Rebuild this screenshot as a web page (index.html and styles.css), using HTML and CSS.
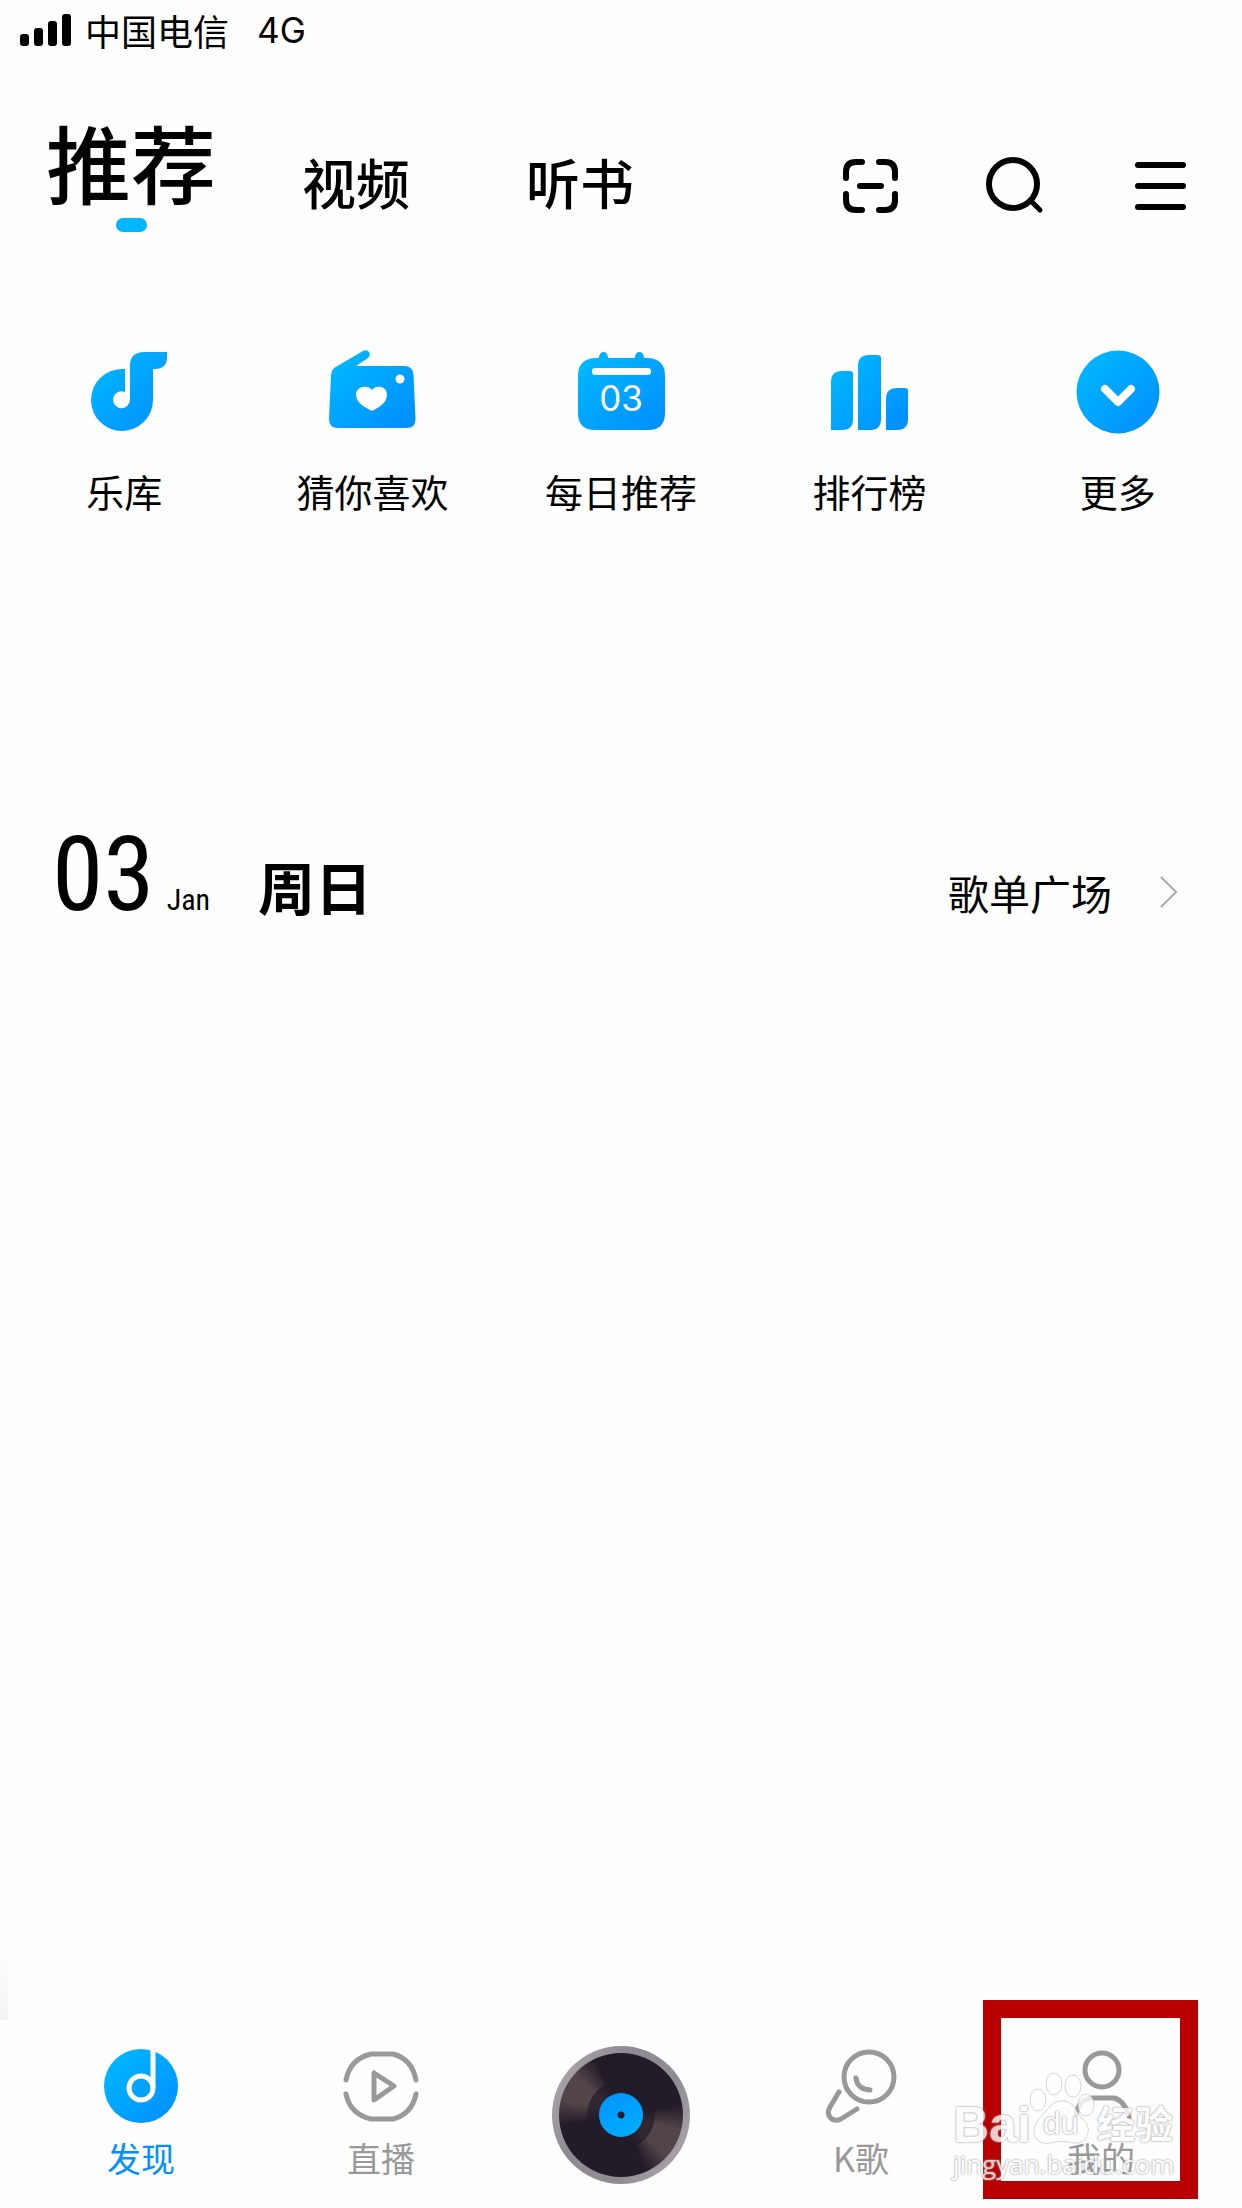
FILE: index.html
```html
<!DOCTYPE html>
<html lang="zh-CN">
<head>
  <meta charset="UTF-8" />
  <meta name="viewport" content="width=device-width, initial-scale=1.0"/>
  <title>推荐</title>
  <link rel="stylesheet" href="styles.css">
</head>
<body>
  <!-- shared gradient -->
  <svg class="defs" width="0" height="0" aria-hidden="true">
    <defs>
      <linearGradient id="blue" x1="0" y1="0" x2="1" y2="1">
        <stop offset="0.1" stop-color="#00b7ff"/>
        <stop offset="0.9" stop-color="#0091ff"/>
      </linearGradient>
    </defs>
  </svg>

  <div class="status-bar">
    <svg class="signal" viewBox="0 0 52 34" aria-hidden="true">
      <rect x="0" y="21" width="9" height="12" rx="3"/>
      <rect x="14" y="15" width="9" height="18" rx="3"/>
      <rect x="28" y="8" width="9" height="25" rx="3"/>
      <rect x="42" y="1" width="9" height="32" rx="3"/>
    </svg>
    <span>中国电信</span>
    <span class="network">4G</span>
  </div>

  <header class="header">
    <nav class="tabs">
      <a class="tab active" href="#">推荐</a>
      <a class="tab" href="#">视频</a>
      <a class="tab" href="#">听书</a>
    </nav>
    <div class="actions">
      <button class="icon-btn" aria-label="扫一扫">
        <svg viewBox="0 0 60 60">
          <path d="M6 26v-6q0-10 10-10h6M39 10h6q10 0 10 10v6M55 42v6q0 10-10 10h-6M22 58h-6q-10 0-10-10v-6M20 34h21"/>
        </svg>
      </button>
      <button class="icon-btn" aria-label="搜索">
        <svg viewBox="0 0 60 60">
          <circle cx="28" cy="32" r="24"/>
          <path class="thin" d="M46 49l9 9"/>
        </svg>
      </button>
      <button class="icon-btn" aria-label="菜单">
        <svg viewBox="0 0 60 60">
          <path d="M8 13h45M8 34h45M8 55h45"/>
        </svg>
      </button>
    </div>
  </header>

  <main>
    <section class="quick">
      <a class="quick-item" href="#">
        <svg viewBox="0 0 90 90" aria-hidden="true">
          <path fill="url(#blue)" d="M46 23h-3.500A31 31 0 1 0 74 54V23h2q12 0 12-12V6H65Q51 6 51 20v34a8.500 8.500 0 1 1-5-8z"/>
        </svg>
        <span>乐库</span>
      </a>
      <a class="quick-item" href="#">
        <svg viewBox="0 0 90 90" aria-hidden="true">
          <path fill="url(#blue)" d="M6 22L35 5q4-2 6 1t-1 6L28 20h48q9 0 9.500 9l2 44q0 9-9 9H10q-9 0-9-9l2-44q0-4 3-7z"/>
          <circle cx="72" cy="33" r="4.500" fill="#fff"/>
          <path fill="#fff" d="M44 44c3-5 15-5 15 5 0 8-9 13-15 16-6-3-16-8-16-16 0-10 13-10 16-5z"/>
        </svg>
        <span>猜你喜欢</span>
      </a>
      <a class="quick-item" href="#">
        <svg viewBox="0 0 90 90" aria-hidden="true">
          <path fill="url(#blue)" d="M19 12h4c0-8 9-8 9 0h27c0-8 9-8 9 0h4q17 1 17 18v37q0 17-17 17H19Q2 84 2 67V30Q2 13 19 12z"/>
          <rect x="16" y="22" width="59" height="7" rx="3" fill="#fff"/>
          <text class="day" x="45" y="65">03</text>
        </svg>
        <span>每日推荐</span>
      </a>
      <a class="quick-item" href="#">
        <svg viewBox="0 0 90 90" aria-hidden="true">
          <linearGradient id="bars" gradientUnits="userSpaceOnUse" x1="6" y1="10" x2="84" y2="84">
            <stop offset="0.100" stop-color="#00b7ff"/>
            <stop offset="0.900" stop-color="#0091ff"/>
          </linearGradient>
          <path fill="url(#bars)" d="M7 84V36q0-11 11-11h8q3 0 3 3v45q0 11-11 11zM34 84V20q0-11 11-11h8q4 0 4 3v61q0 11-11 11zM62 84V53q0-11 11-11h8q3 0 3 3v28q0 11-11 11z"/>
        </svg>
        <span>排行榜</span>
      </a>
      <a class="quick-item" href="#">
        <svg viewBox="0 0 90 90" aria-hidden="true">
          <circle cx="45" cy="46" r="41.500" fill="url(#blue)"/>
          <path d="M32 43l13 13 13-13" fill="none" stroke="#fff" stroke-width="8" stroke-linecap="round" stroke-linejoin="round"/>
        </svg>
        <span>更多</span>
      </a>
    </section>

    <section class="today">
      <span class="date">03</span>
      <span class="month">Jan</span>
      <h2 class="weekday">周日</h2>
      <a class="more" href="#">歌单广场
        <svg viewBox="0 0 18 32" aria-hidden="true"><path d="M1 1l15 15L1 31"/></svg>
      </a>
    </section>
  </main>

  <div class="edge-shadow"></div>

  <nav class="bottom-nav">
    <a class="nav-item active" href="#">
      <svg viewBox="0 0 80 80" aria-hidden="true">
        <circle cx="40" cy="40" r="37" fill="url(#blue)"/>
        <circle cx="40" cy="42" r="12" fill="none" stroke="#fff" stroke-width="5"/>
        <path d="M52 0v42" stroke="#fff" stroke-width="5"/>
      </svg>
      <span>发现</span>
    </a>
    <a class="nav-item" href="#">
      <svg class="line" viewBox="0 0 80 80" aria-hidden="true">
        <path d="M5 34Q9 13 30 8h22Q71 13 75 34M5 48q4 20 25 25h22q19-5 23-25M33 27v27l20-14z"/>
      </svg>
      <span>直播</span>
    </a>
    <a class="nav-item" href="#" aria-label="播放">
      <span class="disc">
        <span class="vinyl"><span class="groove"><span class="label"></span></span></span>
      </span>
    </a>
    <a class="nav-item" href="#">
      <svg class="line" viewBox="0 0 80 80" aria-hidden="true">
        <circle cx="48" cy="31" r="25"/>
        <path d="M35 32q1 11 14 12M18 46L9 61c-5 9 3 16 11 12l16-10"/>
      </svg>
      <span>K歌</span>
    </a>
    <a class="nav-item" href="#">
      <svg class="line" viewBox="0 0 80 80" aria-hidden="true">
        <circle cx="41" cy="24" r="17"/>
        <path d="M15 69q3-17 17-17h21q11 3 15 19"/>
      </svg>
      <span>我的</span>
      <div class="marker"></div>
      <div class="watermark">
        <div class="mark-top">
          <span class="bai">Bai</span>
          <span class="paw">
            <svg viewBox="0 0 68 74" aria-hidden="true">
              <ellipse cx="9" cy="28" rx="8" ry="11"/>
              <ellipse cx="25" cy="12" rx="8" ry="11"/>
              <ellipse cx="44" cy="14" rx="8" ry="11"/>
              <ellipse cx="57" cy="33" rx="8" ry="11"/>
              <path d="M33 29c13 0 13 11 21 18 11 10 3 26-8 24-10-2-16-2-25 0C6 74 0 58 10 47c8-7 11-18 23-18z"/>
            </svg>
            <span class="du">du</span>
          </span>
          <span class="jingyan">经验</span>
        </div>
        <div class="mark-url">jingyan.baidu.com</div>
      </div>
    </a>
  </nav>
</body>
</html>
```
FILE: styles.css
```css
* { box-sizing: border-box; }

body {
  margin: 0;
  min-height: 100vh;
  display: flex;
  flex-direction: column;
  background: #fefefe;
  color: #000;
  font-family: "Noto Sans CJK SC", sans-serif;
}

a { color: inherit; text-decoration: none; }
svg { display: block; overflow: visible; }
.defs { position: absolute; }

.status-bar {
  display: flex;
  align-items: center;
  height: 60px;
  padding: 0 20px;
  font-size: 36px;
  line-height: 60px;
}
.signal { width: 52px; height: 34px; margin-right: 13px; }
.network { font-family: Inter, sans-serif; font-size: 35px; margin-left: 28px; }

/* header */
.header {
  display: flex;
  justify-content: space-between;
  align-items: center;
  padding: 59px 52px 0 18px;
}
.tabs { display: flex; align-items: center; }
.tab { padding: 0 58px; font-size: 54px; line-height: 60px; font-weight: 500; }
.tab.active { padding: 0 28px 12px; font-size: 85px; line-height: 84px; }
.tab.active::after {
  content: "";
  display: block;
  width: 31px;
  height: 14px;
  margin: 15px auto 0;
  border-radius: 7px;
  background: #00b7ff;
}
.actions { display: flex; gap: 85px; }
.icon-btn { width: 60px; height: 60px; padding: 0; border: 0; background: none; }
.icon-btn svg { width: 60px; height: 60px; fill: none; stroke: #000; stroke-width: 6; stroke-linecap: round; }
.icon-btn .thin { stroke-width: 5; }

main { flex: 1; }

/* shortcuts */
.quick { display: grid; grid-template-columns: repeat(5, 1fr); margin-top: 102px; }
.quick-item { display: flex; flex-direction: column; align-items: center; gap: 27px; font-size: 38px; line-height: 56px; }
.quick-item svg { width: 90px; height: 90px; }
.day { font-family: Inter, sans-serif; font-size: 35px; fill: #fff; text-anchor: middle; }

/* date row */
.today { display: flex; align-items: baseline; margin-top: 296px; padding: 0 64px 0 52px; line-height: 120px; }
.date, .month { font-family: "Roboto Condensed", "Liberation Sans Narrow", Roboto, sans-serif; }
.date { font-size: 104px; }
.month { margin-left: 12px; font-size: 30px; }
.weekday { margin: 0 0 0 48px; font-size: 57px; font-weight: 700; }
.more { display: flex; align-items: center; gap: 48px; margin-left: auto; font-size: 41px; }
.more svg { width: 18px; height: 32px; fill: none; stroke: #aaa; stroke-width: 2; }

.edge-shadow { width: 8px; height: 72px; margin-bottom: -20px; background: linear-gradient(#fefefe, #f4f4f4); }

/* bottom navigation */
.bottom-nav { display: flex; padding: 0 21px; }
.nav-item {
  position: relative;
  flex: 1;
  display: flex;
  flex-direction: column;
  align-items: center;
  gap: 8px;
  padding: 46px 0 24px;
  font-size: 34px;
  line-height: 48px;
  color: #999;
}
.nav-item.active { color: #0091ff; }
.nav-item svg { width: 80px; height: 80px; }
.line { fill: none; stroke: #999; stroke-width: 5; stroke-linecap: round; stroke-linejoin: round; }

.disc, .vinyl, .groove, .label { display: block; border-radius: 50%; }
.disc { width: 138px; height: 138px; padding: 7px; background: linear-gradient(120deg, #aaa4a9 10%, #8f8b93 35%, #8f8b93 65%, #aaa4a9 90%); }
.vinyl {
  height: 100%;
  padding: 28px;
  background: conic-gradient(#231b28 80deg, #514549 104deg, #514549 132deg, #231b28 156deg, #231b28 260deg, #514549 284deg, #514549 312deg, #231b28 336deg);
}
.groove { height: 100%; padding: 12px; background: rgba(35, 27, 40, 0.7); }
.label { height: 100%; background: radial-gradient(circle, #231b28 3px, transparent 4px), linear-gradient(150deg, #0091ff, #00b2ff); }

.marker { position: absolute; left: 2px; top: 0; width: 215px; height: 199px; border: 18px solid #b80000; }

.watermark {
  position: absolute;
  left: -28px;
  top: 72px;
  color: #fff;
  opacity: 0.8;
  font-family: "Liberation Sans", "Noto Sans CJK SC", sans-serif;
  text-shadow: 0 0 2px #999, 0 0 2px #999;
  white-space: nowrap;
}
.mark-top { display: flex; align-items: flex-end; height: 74px; line-height: 42px; }
.bai { width: 76px; font-size: 50px; font-weight: 700; }
.paw { position: relative; width: 68px; height: 74px; }
.nav-item .paw svg { width: 68px; height: 74px; fill: #fff; stroke: #ccc; stroke-width: 1; }
.du { position: absolute; left: 14px; top: 30px; font-size: 32px; }
.jingyan { font-size: 38px; font-weight: 700; }
.mark-url { font-family: "Open Sans", sans-serif; font-size: 26px; line-height: 36px; }
```
